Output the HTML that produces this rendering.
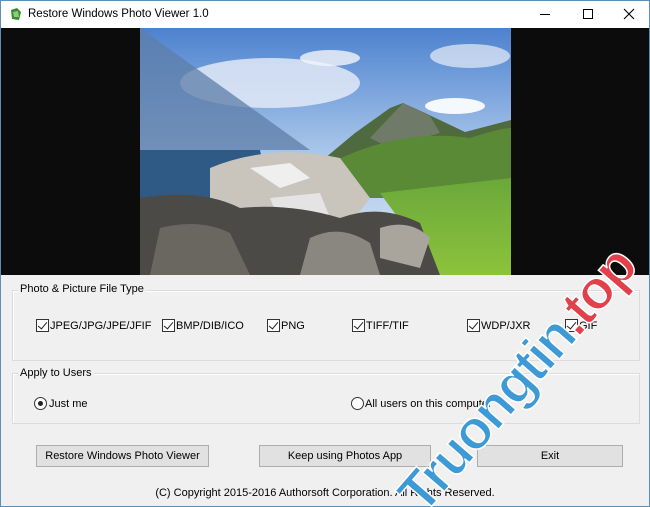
<!DOCTYPE html>
<html style="overflow:hidden;width:650px;height:507px"><head><meta charset="utf-8"><style>
*{margin:0;padding:0;box-sizing:border-box}
body{width:650px;height:507px;overflow:hidden;background:#f0f0f0;font-family:"Liberation Sans",sans-serif;font-size:11px;color:#000;position:relative}
.win{position:absolute;left:0;top:0;width:650px;height:507px;border:1px solid #5a8fb8;}
.title{position:absolute;left:0;top:0;width:648px;height:27px;background:#fff}
.title .t{position:absolute;left:27px;top:7px;font-size:11.5px}
.ab{position:absolute}
.grp{position:absolute;border:1px solid #dcdcdc;box-shadow:inset 1px 1px 0 #fff}
.lbl{position:absolute;background:#f0f0f0;padding:0 2px}
.cb{position:absolute;width:13px;height:13px;border:1px solid #333;background:#fff}
.cb:after{content:"";position:absolute;left:3px;top:0px;width:4px;height:8px;border-right:1.4px solid #222;border-bottom:1.4px solid #222;transform:rotate(40deg)}
.rd{position:absolute;width:13px;height:13px;border:1px solid #333;border-radius:50%;background:#fff}
.btn{position:absolute;height:22px;background:#e1e1e1;border:1px solid #adadad;text-align:center;line-height:20px}
.clip{position:absolute;left:0;top:0;width:650px;height:507px;overflow:hidden}
.wm{position:absolute;left:430px;top:466px;height:56px;line-height:56px;font-size:55px;font-weight:bold;color:#3d9ad6;transform:rotate(-49deg);transform-origin:left bottom;white-space:nowrap;-webkit-text-stroke:1.5px #fff;font-family:"Liberation Sans",sans-serif;letter-spacing:-2px}
</style></head><body>
<div class="win"></div>
<div class="title" style="left:1px;top:1px">
<svg class="ab" style="left:8px;top:6px" width="14" height="14"><path d="M2 3 L8 1 L12 5 L10 13 L3 12 Z" fill="#3a8a3a"/><path d="M4 5 L9 4 L10 10 L5 10Z" fill="#8bd06a"/></svg>
<span class="t">Restore Windows Photo Viewer 1.0</span>
<div class="ab" style="left:539px;top:13px;width:10px;height:1px;background:#000"></div>
<div class="ab" style="left:582px;top:8px;width:10px;height:10px;border:1px solid #000"></div>
<svg class="ab" style="left:622px;top:7px" width="12" height="12"><path d="M1 1L11 11M11 1L1 11" stroke="#000" stroke-width="1.1"/></svg>
</div>
<div class="ab" style="left:1px;top:28px;width:648px;height:247px;background:#0c0c0c"></div>
<svg class="ab" style="left:140px;top:28px" width="371" height="247" viewBox="0 0 371 247">
<defs><linearGradient id="sky" x1="0" y1="0" x2="0" y2="1"><stop offset="0" stop-color="#4d82cf"/><stop offset="0.5" stop-color="#a9c6ea"/><stop offset="1" stop-color="#dbe6f2"/></linearGradient>
<linearGradient id="gr" x1="0" y1="0" x2="0" y2="1"><stop offset="0" stop-color="#6aa83a"/><stop offset="1" stop-color="#8cc33c"/></linearGradient></defs>
<rect width="371" height="247" fill="url(#sky)"/>
<ellipse cx="130" cy="55" rx="90" ry="25" fill="#e8eef7" opacity=".8"/>
<ellipse cx="190" cy="30" rx="30" ry="8" fill="#f2f5fa" opacity=".8"/>
<ellipse cx="315" cy="78" rx="30" ry="8" fill="#f5f8fc"/>
<ellipse cx="330" cy="28" rx="40" ry="12" fill="#e8eef7" opacity=".7"/>
<path d="M185 130 L215 105 L250 80 L263 75 L285 85 L325 104 L371 92 L371 170 L185 170Z" fill="#4f6a3e"/>
<path d="M230 110 L263 75 L290 88 L300 105 L250 120Z" fill="#6f7a68"/>
<path d="M190 135 Q260 100 330 110 Q360 100 371 100 L371 170 L190 170Z" fill="#5a8a36"/>
<path d="M240 165 L371 150 L371 247 L300 247Z" fill="url(#gr)"/>
<path d="M0 122 L120 122 L130 170 L0 170Z" fill="#2f5a86"/>
<path d="M70 140 Q130 115 200 130 L230 170 L200 210 L90 205 L70 170Z" fill="#c9c5bd"/>
<path d="M110 140 L150 135 L170 150 L140 160Z" fill="#efefef"/>
<path d="M130 170 L180 165 L190 190 L140 195Z" fill="#e4e4e4"/>
<path d="M0 170 Q60 160 100 180 Q150 175 200 190 Q240 175 280 195 L300 247 L0 247Z" fill="#4c4a46"/>
<path d="M20 200 Q60 190 90 205 L110 247 L10 247Z" fill="#6a6660"/>
<path d="M170 210 Q200 195 230 215 L240 247 L160 247Z" fill="#8a8680"/>
<path d="M240 200 Q270 190 290 210 L280 240 L240 230Z" fill="#a9a49c"/>
<path d="M0 0 L170 122 L0 122Z" fill="#5d7ea8" opacity=".75"/>
</svg>
<div class="grp" style="left:12px;top:290px;width:628px;height:71px"></div>
<div class="lbl" style="left:18px;top:283px">Photo &amp; Picture File Type</div>
<div class="cb" style="left:36px;top:319px"></div><div class="ab" style="left:50px;top:320px">JPEG/JPG/JPE/JFIF</div>
<div class="cb" style="left:162px;top:319px"></div><div class="ab" style="left:176px;top:320px">BMP/DIB/ICO</div>
<div class="cb" style="left:267px;top:319px"></div><div class="ab" style="left:281px;top:320px">PNG</div>
<div class="cb" style="left:352px;top:319px"></div><div class="ab" style="left:366px;top:320px">TIFF/TIF</div>
<div class="cb" style="left:467px;top:319px"></div><div class="ab" style="left:481px;top:320px">WDP/JXR</div>
<div class="cb" style="left:565px;top:319px"></div><div class="ab" style="left:579px;top:320px">GIF</div>
<div class="grp" style="left:12px;top:373px;width:628px;height:51px"></div>
<div class="lbl" style="left:18px;top:367px">Apply to Users</div>
<div class="rd" style="left:34px;top:397px"><div class="ab" style="left:3px;top:3px;width:5px;height:5px;border-radius:50%;background:#222"></div></div>
<div class="ab" style="left:49px;top:398px">Just me</div>
<div class="rd" style="left:351px;top:397px"></div>
<div class="ab" style="left:365px;top:398px">All users on this computer</div>
<div class="btn" style="left:36px;top:445px;width:173px">Restore Windows Photo Viewer</div>
<div class="btn" style="left:259px;top:445px;width:172px">Keep using Photos App</div>
<div class="btn" style="left:477px;top:445px;width:146px">Exit</div>
<div class="ab" style="left:0;width:650px;top:487px;text-align:center">(C) Copyright 2015-2016 Authorsoft Corporation. All Rights Reserved.</div>
<div class="clip"><div class="wm">Truongtin<span style="color:#e0414a">.top</span></div></div>
</body></html>
